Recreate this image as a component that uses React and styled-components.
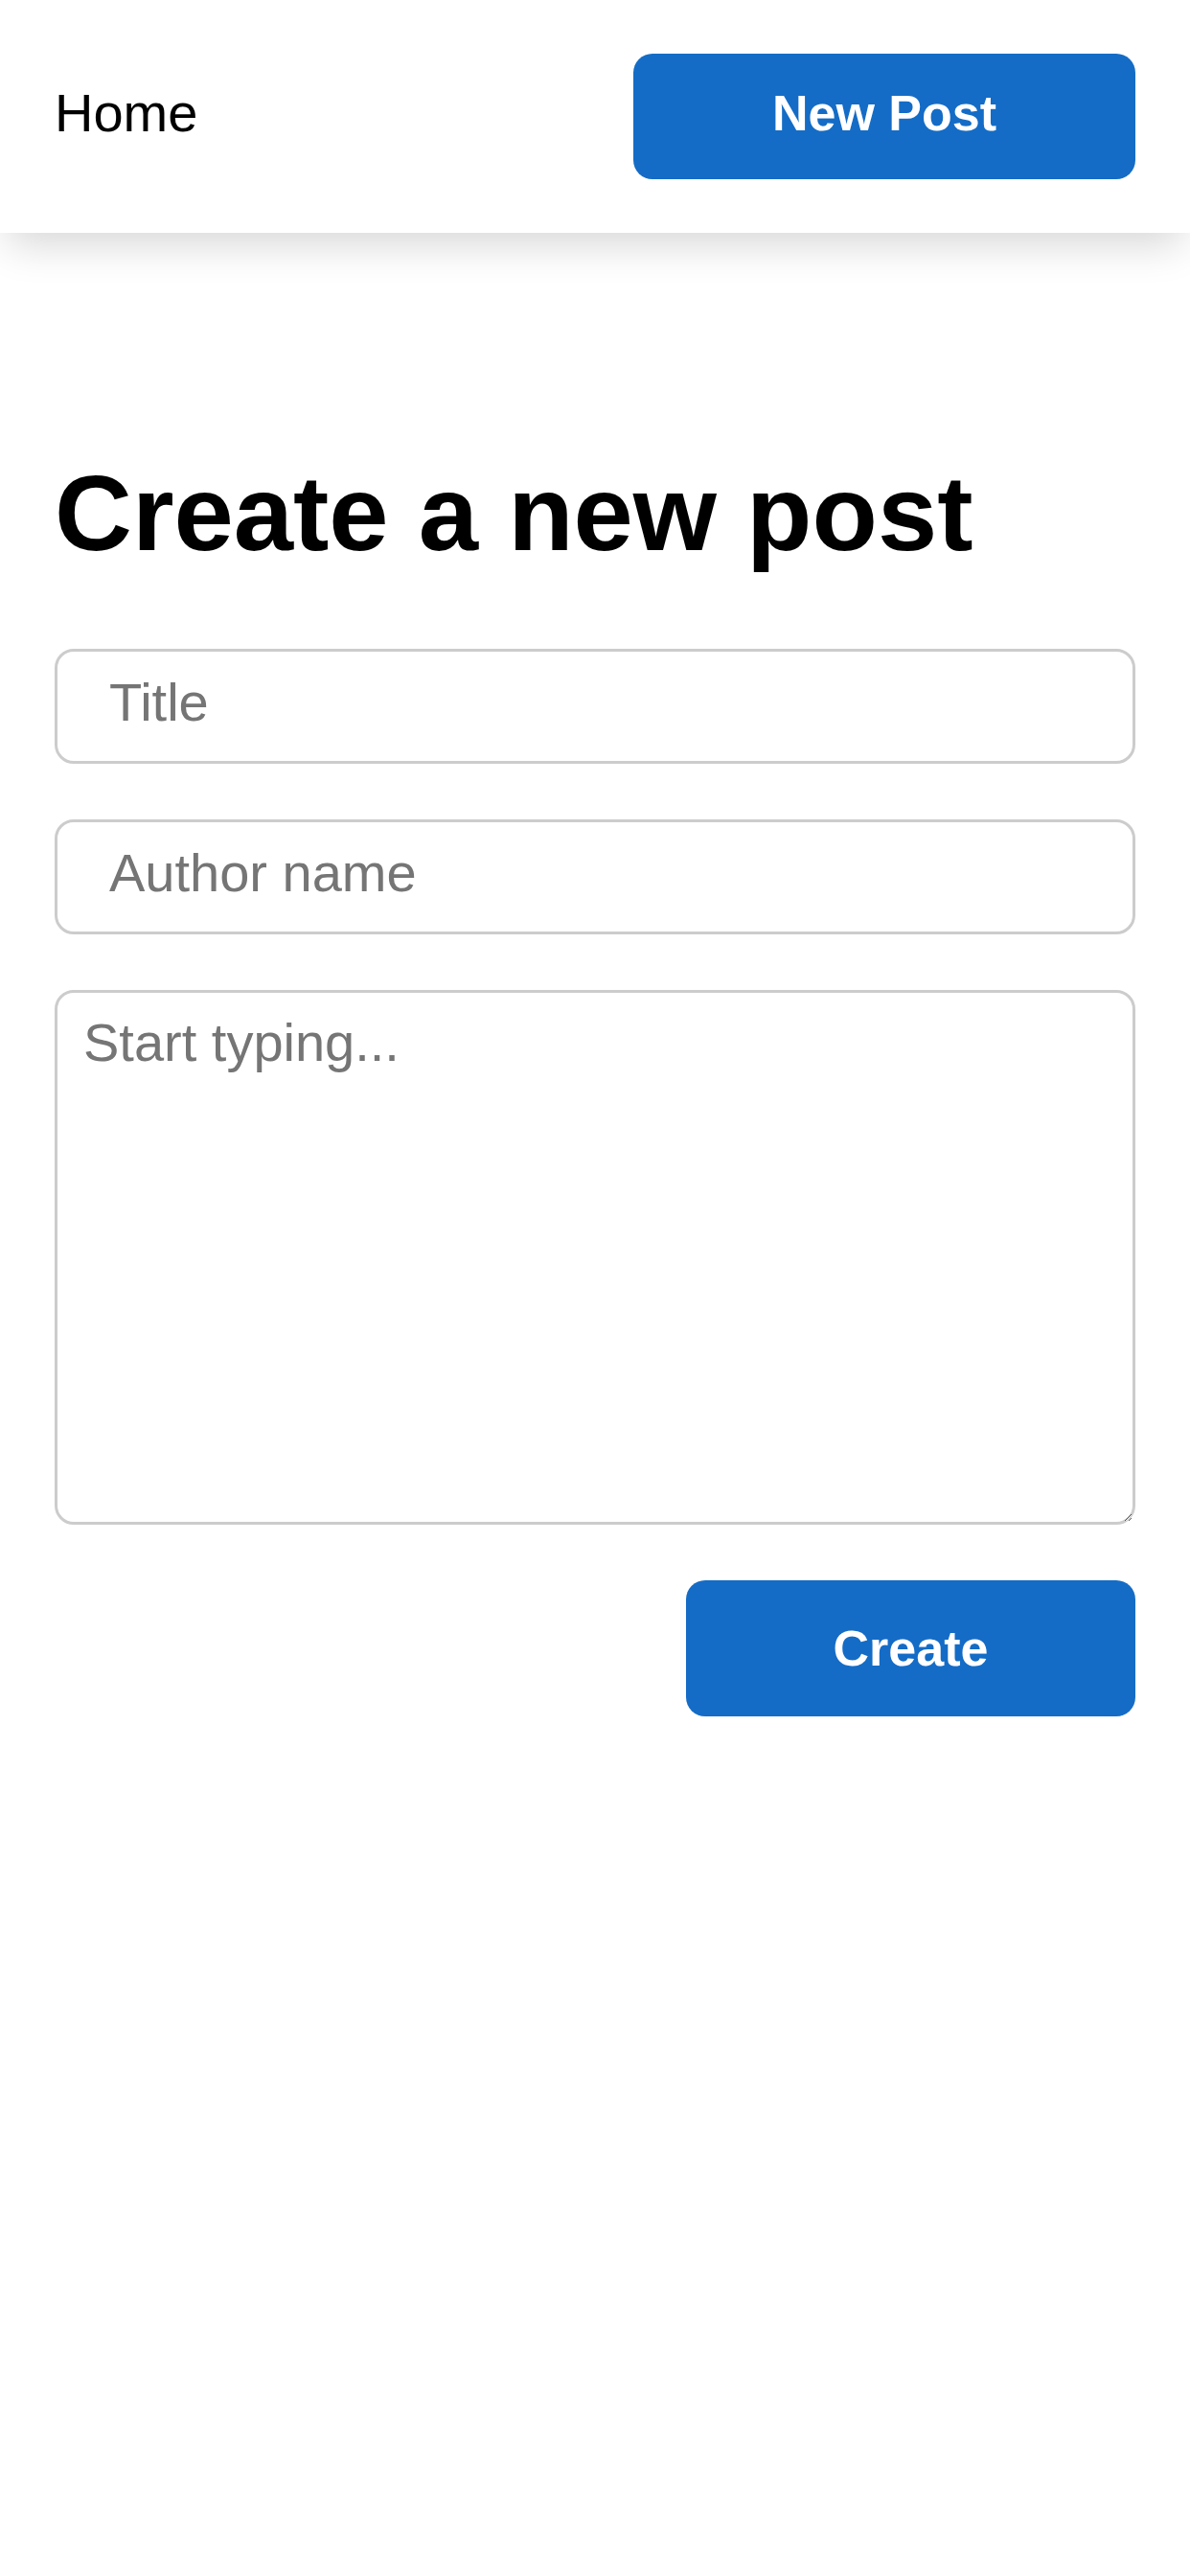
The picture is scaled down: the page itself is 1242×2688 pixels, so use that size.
import React from "react";
import styled, { createGlobalStyle } from "styled-components";

const GlobalStyle = createGlobalStyle`
  html, body {
    margin: 0;
    padding: 0;
    background: #ffffff;
  }
  body {
    font-family: "Liberation Sans", Arial, Helvetica, sans-serif;
    color: #000;
    min-height: 2688px;
  }
  * { box-sizing: border-box; }
`;

const Header = styled.header`
  height: 243px;
  padding: 0 57px;
  display: flex;
  align-items: center;
  justify-content: space-between;
  background: #fff;
  box-shadow: 0 20px 40px -8px rgba(0, 0, 0, 0.16);
  position: relative;
  z-index: 1;
`;

const HomeLink = styled.a`
  font-size: 56px;
  line-height: 1;
  color: #000;
  text-decoration: none;
  padding-bottom: 8px;
`;

const PrimaryButton = styled.button`
  width: ${(p) => p.$width}px;
  height: ${(p) => p.$height}px;
  border: none;
  border-radius: 20px;
  background: #146cc6;
  color: #fff;
  font-family: "Liberation Sans", Arial, Helvetica, sans-serif;
  font-weight: 700;
  font-size: 52px;
  line-height: 1;
  padding: 0 0 ${(p) => p.$lift || 0}px;
  cursor: pointer;
`;

const Main = styled.main`
  padding: 237px 57px 0;
`;

const Heading = styled.h1`
  margin: 0 0 85px;
  font-size: 112px;
  line-height: 1;
  font-weight: 700;
`;

const Form = styled.form`
  display: flex;
  flex-direction: column;
  gap: 58px;
`;

const TextInput = styled.input`
  width: 100%;
  height: 120px;
  border: 3px solid #cccccc;
  border-radius: 20px;
  padding: 0 40px 10px 54px;
  font-family: "Liberation Sans", Arial, Helvetica, sans-serif;
  font-size: 56px;
  color: #000;
  background: #fff;
  outline: none;
  &::placeholder { color: #757575; }
`;

const TextArea = styled.textarea`
  width: 100%;
  height: 558px;
  border: 3px solid #cccccc;
  border-radius: 20px;
  padding: 19px 27px;
  font-family: "Liberation Sans", Arial, Helvetica, sans-serif;
  font-size: 56px;
  color: #000;
  background: #fff;
  outline: none;
  resize: both;
  display: block;
  &::placeholder { color: #757575; }
`;

const Actions = styled.div`
  display: flex;
  justify-content: flex-end;
`;

export default function App() {
  return (
    <>
      <GlobalStyle />
      <Header>
        <HomeLink href="#">Home</HomeLink>
        <PrimaryButton type="button" $width={524} $height={131} $lift={8}>
          New Post
        </PrimaryButton>
      </Header>
      <Main>
        <Heading>Create a new post</Heading>
        <Form onSubmit={(e) => e.preventDefault()}>
          <TextInput type="text" placeholder="Title" />
          <TextInput type="text" placeholder="Author name" />
          <TextArea placeholder="Start typing..." />
          <Actions>
            <PrimaryButton type="submit" $width={469} $height={142}>
              Create
            </PrimaryButton>
          </Actions>
        </Form>
      </Main>
    </>
  );
}
